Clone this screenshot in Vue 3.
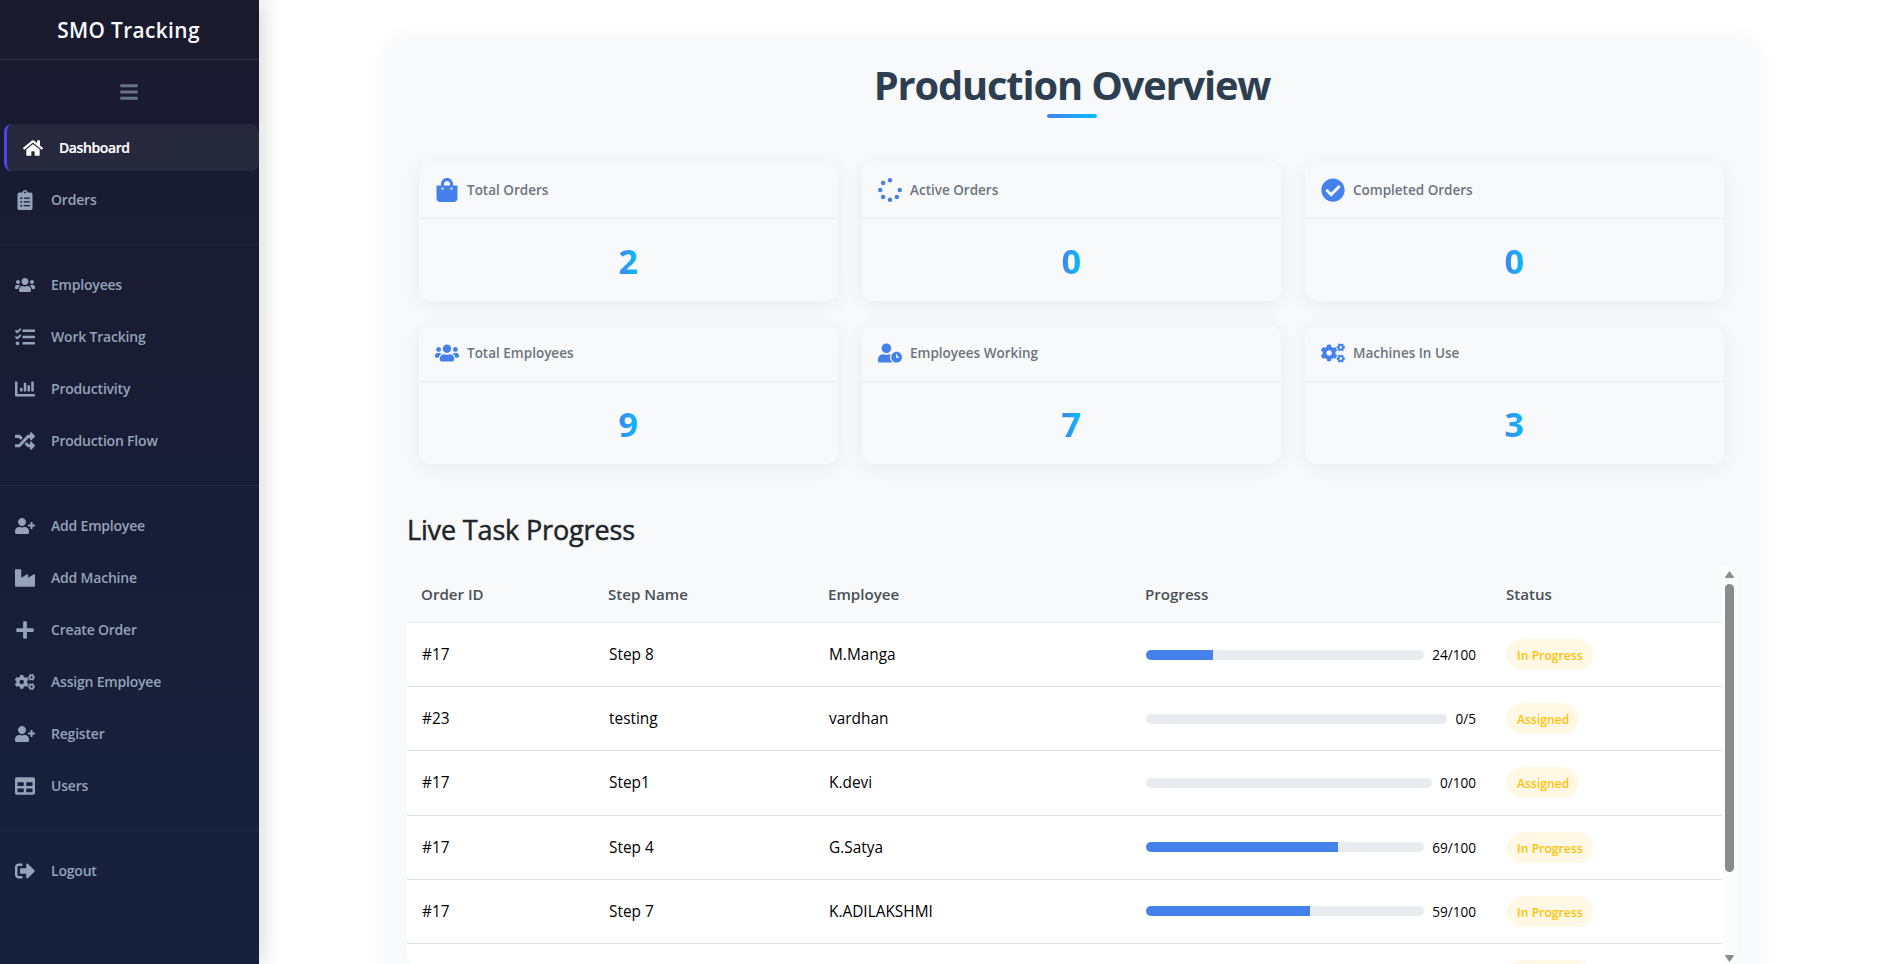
<script setup>
const smallGear = 'M512.1 191l-8.2 14.3c-3 5.3-9.4 7.5-15.1 5.4-11.8-4.4-22.6-10.7-32.1-18.6-4.6-3.8-5.8-10.5-2.8-15.7l8.2-14.3c-6.9-8-12.3-17.3-15.9-27.4h-16.5c-6 0-11.2-4.3-12.2-10.3-2-12-2.1-24.6 0-37.1 1-6 6.2-10.4 12.2-10.4h16.5c3.6-10.1 9-19.4 15.9-27.4l-8.2-14.3c-3-5.2-1.9-11.9 2.8-15.7 9.5-7.9 20.4-14.2 32.1-18.6 5.7-2.1 12.1.1 15.1 5.4l8.2 14.3c10.5-1.9 21.2-1.9 31.7 0L552 6.3c3-5.3 9.4-7.5 15.1-5.4 11.8 4.4 22.6 10.7 32.1 18.6 4.6 3.8 5.8 10.5 2.8 15.7l-8.2 14.3c6.9 8 12.3 17.3 15.9 27.4h16.5c6 0 11.2 4.3 12.2 10.3 2 12 2.1 24.6 0 37.1-1 6-6.2 10.4-12.2 10.4h-16.5c-3.6 10.1-9 19.4-15.9 27.4l8.2 14.3c3 5.2 1.9 11.9-2.8 15.7-9.5 7.9-20.4 14.2-32.1 18.6-5.7 2.1-12.1-.1-15.1-5.4l-8.2-14.3c-10.4 1.9-21.2 1.9-31.7 0zm-10.5-58.8c38.5 29.6 82.4-14.3 52.8-52.8-38.5-29.7-82.4 14.3-52.8 52.8z'
const bigGear = 'M386.3 286.1l33.7 16.8c10.1 5.8 14.5 18.1 10.5 29.1-8.9 24.2-26.4 46.4-42.6 65.8-7.4 8.9-20.2 11.1-30.3 5.3l-29.1-16.8c-16 13.7-34.6 24.6-54.9 31.7v33.6c0 11.6-8.3 21.6-19.7 23.6-24.6 4.2-50.4 4.4-75.9 0-11.5-2-20-11.9-20-23.6V418c-20.3-7.2-38.9-18-54.9-31.7L74 403c-10 5.8-22.9 3.6-30.3-5.3-16.2-19.4-33.3-41.6-42.2-65.7-4-10.9.4-23.2 10.5-29.1l33.3-16.8c-3.9-20.9-3.9-42.4 0-63.4L12 205.8c-10.1-5.8-14.6-18.1-10.5-29 8.9-24.2 26-46.4 42.2-65.8 7.4-8.9 20.2-11.1 30.3-5.3l29.1 16.8c16-13.7 34.6-24.6 54.9-31.7V57.1c0-11.5 8.2-21.5 19.6-23.5 24.6-4.2 50.5-4.4 76-.1 11.5 2 20 11.9 20 23.6v33.6c20.3 7.2 38.9 18 54.9 31.7l29.1-16.8c10-5.8 22.9-3.6 30.3 5.3 16.2 19.4 33.2 41.6 42.1 65.8 4 10.9.1 23.2-10 29.1l-33.7 16.8c3.9 21 3.9 42.5 0 63.5zm-117.6 21.1c59.2-77-28.7-164.9-105.7-105.7-59.2 77 28.7 164.9 105.7 105.7z'

const dot = (x, y, r = 48) => `M${x - r} ${y}a${r} ${r} 0 1 0 ${2 * r} 0a${r} ${r} 0 1 0 ${-2 * r} 0z`

const icons = {
  bars: { w: 448, d: 'M16 132h416c8.837 0 16-7.163 16-16V76c0-8.837-7.163-16-16-16H16C7.163 60 0 67.163 0 76v40c0 8.837 7.163 16 16 16zm0 160h416c8.837 0 16-7.163 16-16v-40c0-8.837-7.163-16-16-16H16c-8.837 0-16 7.163-16 16v40c0 8.837 7.163 16 16 16zm0 160h416c8.837 0 16-7.163 16-16v-40c0-8.837-7.163-16-16-16H16c-8.837 0-16 7.163-16 16v40c0 8.837 7.163 16 16 16z' },
  home: { w: 576, d: 'M280.37 148.26L96 300.11V464a16 16 0 0 0 16 16l112.06-.29a16 16 0 0 0 15.92-16V368a16 16 0 0 1 16-16h64a16 16 0 0 1 16 16v95.64a16 16 0 0 0 16 16.05L464 480a16 16 0 0 0 16-16V300L295.67 148.26a12.19 12.19 0 0 0-15.3 0zM571.6 251.47L488 182.56V44.05a12 12 0 0 0-12-12h-56a12 12 0 0 0-12 12v72.61L318.47 43a48 48 0 0 0-61 0L4.34 251.47a12 12 0 0 0-1.6 16.9l25.5 31A12 12 0 0 0 45.15 301l235.22-193.74a12.19 12.19 0 0 1 15.3 0L530.9 301a12 12 0 0 0 16.9-1.6l25.5-31a12 12 0 0 0-1.7-16.93z' },
  clipboard: { w: 384, d: 'M336 64h-80c0-35.3-28.7-64-64-64s-64 28.7-64 64H48C21.5 64 0 85.5 0 112v352c0 26.5 21.5 48 48 48h288c26.5 0 48-21.5 48-48V112c0-26.5-21.5-48-48-48zM96 424c-13.3 0-24-10.7-24-24s10.7-24 24-24 24 10.7 24 24-10.7 24-24 24zm0-96c-13.3 0-24-10.7-24-24s10.7-24 24-24 24 10.7 24 24-10.7 24-24 24zm0-96c-13.3 0-24-10.7-24-24s10.7-24 24-24 24 10.7 24 24-10.7 24-24 24zm96-192c13.3 0 24 10.7 24 24s-10.7 24-24 24-24-10.7-24-24 10.7-24 24-24zm128 368c0 4.4-3.6 8-8 8H168c-4.4 0-8-3.6-8-8v-16c0-4.4 3.6-8 8-8h144c4.4 0 8 3.6 8 8v16zm0-96c0 4.4-3.6 8-8 8H168c-4.4 0-8-3.6-8-8v-16c0-4.4 3.6-8 8-8h144c4.4 0 8 3.6 8 8v16zm0-96c0 4.4-3.6 8-8 8H168c-4.4 0-8-3.6-8-8v-16c0-4.4 3.6-8 8-8h144c4.4 0 8 3.6 8 8v16z' },
  users: { w: 640, d: 'M96 224c35.3 0 64-28.7 64-64s-28.7-64-64-64-64 28.7-64 64 28.7 64 64 64zm448 0c35.3 0 64-28.7 64-64s-28.7-64-64-64-64 28.7-64 64 28.7 64 64 64zm32 32h-64c-17.6 0-33.5 7.1-45.1 18.6 40.3 22.1 68.9 62 75.1 109.4h66c17.7 0 32-14.3 32-32v-32c0-35.3-28.7-64-64-64zm-256 0c61.9 0 112-50.1 112-112S381.9 32 320 32 208 82.1 208 144s50.1 112 112 112zm76.8 32h-8.3c-20.8 10-43.9 16-68.5 16s-47.6-6-68.5-16h-8.3C179.6 288 128 339.6 128 403.2V432c0 26.5 21.5 48 48 48h288c26.5 0 48-21.5 48-48v-28.8c0-63.6-51.6-115.2-115.2-115.2zm-223.7-13.4C161.5 263.1 145.6 256 128 256H64c-35.3 0-64 28.7-64 64v32c0 17.7 14.3 32 32 32h65.9c6.3-47.4 34.9-87.3 75.2-109.4z' },
  tasks: { w: 512, d: 'M139.61 35.5a12 12 0 0 0-17 0L58.93 98.81l-22.7-22.12a12 12 0 0 0-17 0L3.53 92.41a12 12 0 0 0 0 17l47.59 47.4a12.78 12.78 0 0 0 17.61 0l15.59-15.62L156.52 69a12.09 12.09 0 0 0 .09-17zm0 159.19a12 12 0 0 0-17 0l-63.68 63.72-22.7-22.1a12 12 0 0 0-17 0L3.53 252a12 12 0 0 0 0 17L51 316.5a12.77 12.77 0 0 0 17.6 0l15.7-15.69 72.2-72.22a12 12 0 0 0 .09-16.9zM64 368c-26.49 0-48.59 21.5-48.59 48S37.53 464 64 464a48 48 0 0 0 0-96zm432 16H208a16 16 0 0 0-16 16v32a16 16 0 0 0 16 16h288a16 16 0 0 0 16-16v-32a16 16 0 0 0-16-16zm0-320H208a16 16 0 0 0-16 16v32a16 16 0 0 0 16 16h288a16 16 0 0 0 16-16V80a16 16 0 0 0-16-16zm0 160H208a16 16 0 0 0-16 16v32a16 16 0 0 0 16 16h288a16 16 0 0 0 16-16v-32a16 16 0 0 0-16-16z' },
  chart: { w: 512, d: 'M332.8 320h38.4c6.4 0 12.8-6.4 12.8-12.8V172.8c0-6.4-6.4-12.8-12.8-12.8h-38.4c-6.4 0-12.8 6.4-12.8 12.8v134.4c0 6.4 6.4 12.8 12.8 12.8zm96 0h38.4c6.4 0 12.8-6.4 12.8-12.8V76.8c0-6.4-6.4-12.8-12.8-12.8h-38.4c-6.4 0-12.8 6.4-12.8 12.8v230.4c0 6.4 6.4 12.8 12.8 12.8zm-288 0h38.4c6.4 0 12.8-6.4 12.8-12.8v-70.4c0-6.4-6.4-12.8-12.8-12.8h-38.4c-6.4 0-12.8 6.4-12.8 12.8v70.4c0 6.4 6.4 12.8 12.8 12.8zm96 0h38.4c6.4 0 12.8-6.4 12.8-12.8V108.8c0-6.4-6.4-12.8-12.8-12.8h-38.4c-6.4 0-12.8 6.4-12.8 12.8v198.4c0 6.4 6.4 12.8 12.8 12.8zM496 384H64V80c0-8.84-7.16-16-16-16H16C7.16 64 0 71.16 0 80v336c0 17.67 14.33 32 32 32h464c8.84 0 16-7.16 16-16v-32c0-8.84-7.16-16-16-16z' },
  random: { w: 512, d: 'M504.971 359.029c9.373 9.373 9.373 24.569 0 33.941l-80 79.984c-15.01 15.01-40.971 4.49-40.971-16.971V416h-58.785a12.004 12.004 0 0 1-8.773-3.812l-70.556-75.596 53.333-57.143L352 336h32v-39.981c0-21.438 25.943-31.998 40.971-16.971l80 79.981zM12 176h84l52.781 56.551 53.333-57.143-70.556-75.596A11.999 11.999 0 0 0 122.785 96H12c-6.627 0-12 5.373-12 12v56c0 6.627 5.373 12 12 12zm372 0v39.984c0 21.46 25.961 31.98 40.971 16.971l80-79.984c9.373-9.373 9.373-24.569 0-33.941l-80-79.981C409.943 24.021 384 34.582 384 56.019V96h-58.785a12.004 12.004 0 0 0-8.773 3.812L96 336H12c-6.627 0-12 5.373-12 12v56c0 6.627 5.373 12 12 12h110.785c3.326 0 6.503-1.381 8.773-3.812L352 176h32z' },
  userPlus: { w: 640, d: 'M624 208h-64v-64c0-8.8-7.2-16-16-16h-32c-8.8 0-16 7.2-16 16v64h-64c-8.8 0-16 7.2-16 16v32c0 8.8 7.2 16 16 16h64v64c0 8.8 7.2 16 16 16h32c8.8 0 16-7.2 16-16v-64h64c8.8 0 16-7.2 16-16v-32c0-8.8-7.2-16-16-16zm-400 48c70.7 0 128-57.3 128-128S294.7 0 224 0 96 57.3 96 128s57.3 128 128 128zm89.6 32h-16.7c-22.2 10.2-46.9 16-72.9 16s-50.6-5.8-72.9-16h-16.7C60.2 288 0 348.2 0 422.4V464c0 26.5 21.5 48 48 48h352c26.5 0 48-21.5 48-48v-41.6c0-74.2-60.2-134.4-134.4-134.4z' },
  industry: { w: 512, d: 'M475.115 163.781L336 252.309v-68.28c0-18.916-20.931-30.399-36.885-20.248L160 252.309V56c0-13.255-10.745-24-24-24H24C10.745 32 0 42.745 0 56v400c0 13.255 10.745 24 24 24h464c13.255 0 24-10.745 24-24V184.029c0-18.917-20.931-30.399-36.885-20.248z' },
  plus: { w: 448, d: 'M416 208H272V64c0-17.67-14.33-32-32-32h-32c-17.67 0-32 14.33-32 32v144H32c-17.67 0-32 14.33-32 32v32c0 17.67 14.33 32 32 32h144v144c0 17.67 14.33 32 32 32h32c17.67 0 32-14.33 32-32V304h144c17.67 0 32-14.33 32-32v-32c0-17.67-14.33-32-32-32z' },
  cogs: { w: 640, d: smallGear + bigGear + smallGear.replace('M512.1 191', 'M512.1 489.9').replace('L552 6.3', 'L552 305.2') },
  table: { w: 512, d: 'M464 32H48C21.49 32 0 53.49 0 80v352c0 26.51 21.49 48 48 48h416c26.51 0 48-21.49 48-48V80c0-26.51-21.49-48-48-48zM224 416H64v-96h160v96zm0-160H64v-96h160v96zm224 160H288v-96h160v96zm0-160H288v-96h160v96z' },
  signOut: { w: 512, d: 'M497 273L329 441c-15 15-41 4.5-41-17v-96H152c-13.3 0-24-10.7-24-24v-96c0-13.3 10.7-24 24-24h136V88c0-21.4 25.9-32 41-17l168 168c9.3 9.4 9.3 24.6 0 34zM192 436v-40c0-6.6-5.4-12-12-12H96c-17.7 0-32-14.3-32-32V160c0-17.7 14.3-32 32-32h84c6.6 0 12-5.4 12-12V76c0-6.6-5.4-12-12-12H96c-53 0-96 43-96 96v192c0 53 43 96 96 96h84c6.6 0 12-5.4 12-12z' },
  bag: { w: 448, d: 'M352 160v-32C352 57.42 294.579 0 224 0 153.42 0 96 57.42 96 128v32H0v272c0 44.183 35.817 80 80 80h288c44.183 0 80-35.817 80-80V160h-96zm-192-32c0-35.29 28.71-64 64-64s64 28.71 64 64v32H160v-32zm160 120c-13.255 0-24-10.745-24-24s10.745-24 24-24 24 10.745 24 24-10.745 24-24 24zm-192 0c-13.255 0-24-10.745-24-24s10.745-24 24-24 24 10.745 24 24-10.745 24-24 24z' },
  spinner: { w: 512, d: dot(256, 48) + dot(256, 464) + dot(48, 256) + dot(464, 256) + dot(402.9, 402.9) + dot(109.1, 109.1) + dot(109.1, 402.9) },
  check: { w: 512, d: 'M504 256c0 136.967-111.033 248-248 248S8 392.967 8 256 119.033 8 256 8s248 111.033 248 248zM227.314 387.314l184-184c6.248-6.248 6.248-16.379 0-22.627l-22.627-22.627c-6.248-6.249-16.379-6.249-22.628 0L216 308.118l-70.059-70.059c-6.248-6.248-16.379-6.248-22.628 0l-22.627 22.627c-6.248 6.248-6.248 16.379 0 22.627l104 104c6.249 6.249 16.379 6.249 22.628.001z' },
  userClock: { w: 640, d: 'M496 224c-79.6 0-144 64.4-144 144s64.4 144 144 144 144-64.4 144-144-64.4-144-144-144zm64 150.3c0 5.3-4.4 9.7-9.7 9.7h-60.6c-5.3 0-9.7-4.4-9.7-9.7v-76.6c0-5.3 4.4-9.7 9.7-9.7h12.6c5.3 0 9.7 4.4 9.7 9.7V352h38.3c5.3 0 9.7 4.4 9.7 9.7v12.6zM320 368c0-27.8 6.7-54.1 18.2-77.5-8-1.5-16.2-2.5-24.6-2.5h-16.7c-22.2 10.2-46.9 16-72.9 16s-50.6-5.8-72.9-16h-16.7C60.2 288 0 348.2 0 422.4V464c0 26.5 21.5 48 48 48h347.1c-45.3-31.9-75.1-84.5-75.1-144zm-96-112c70.7 0 128-57.3 128-128S294.7 0 224 0 96 57.3 96 128s57.3 128 128 128z' },
}

const box = (name) => `0 0 ${icons[name].w} 512`

const groups = [
  [
    { icon: 'home', label: 'Dashboard', active: true },
    { icon: 'clipboard', label: 'Orders' },
  ],
  [
    { icon: 'users', label: 'Employees' },
    { icon: 'tasks', label: 'Work Tracking' },
    { icon: 'chart', label: 'Productivity' },
    { icon: 'random', label: 'Production Flow' },
  ],
  [
    { icon: 'userPlus', label: 'Add Employee' },
    { icon: 'industry', label: 'Add Machine' },
    { icon: 'plus', label: 'Create Order' },
    { icon: 'cogs', label: 'Assign Employee' },
    { icon: 'userPlus', label: 'Register' },
    { icon: 'table', label: 'Users' },
  ],
  [{ icon: 'signOut', label: 'Logout' }],
]

const cards = [
  { icon: 'bag', label: 'Total Orders', value: 2 },
  { icon: 'spinner', label: 'Active Orders', value: 0 },
  { icon: 'check', label: 'Completed Orders', value: 0 },
  { icon: 'users', label: 'Total Employees', value: 9 },
  { icon: 'userClock', label: 'Employees Working', value: 7 },
  { icon: 'cogs', label: 'Machines In Use', value: 3 },
]

const tasks = [
  { order: '#17', step: 'Step 8', employee: 'M.Manga', done: 24, total: 100, status: 'In Progress' },
  { order: '#23', step: 'testing', employee: 'vardhan', done: 0, total: 5, status: 'Assigned' },
  { order: '#17', step: 'Step1', employee: 'K.devi', done: 0, total: 100, status: 'Assigned' },
  { order: '#17', step: 'Step 4', employee: 'G.Satya', done: 69, total: 100, status: 'In Progress' },
  { order: '#17', step: 'Step 7', employee: 'K.ADILAKSHMI', done: 59, total: 100, status: 'In Progress' },
]
</script>

<template>
  <div class="layout">
    <aside class="sidebar">
      <div class="brand">SMO Tracking</div>
      <div class="toggle">
        <svg class="nav-icon" :viewBox="box('bars')"><path :d="icons.bars.d" /></svg>
      </div>
      <nav>
        <ul v-for="(group, i) in groups" :key="i" class="group">
          <li v-for="item in group" :key="item.label" class="nav-row">
            <a class="nav-item" :class="{ active: item.active }">
              <svg class="nav-icon" :viewBox="box(item.icon)"><path :d="icons[item.icon].d" /></svg>
              <span>{{ item.label }}</span>
            </a>
          </li>
        </ul>
      </nav>
    </aside>

    <main class="main">
      <section class="panel">
        <h1 class="title">Production Overview</h1>
        <div class="cards">
          <article v-for="card in cards" :key="card.label" class="card">
            <header class="card-head">
              <svg class="card-icon" :viewBox="box(card.icon)"><path :d="icons[card.icon].d" /></svg>
              <span>{{ card.label }}</span>
            </header>
            <div class="card-body"><span class="value">{{ card.value }}</span></div>
          </article>
        </div>

        <h2 class="subtitle">Live Task Progress</h2>
        <div class="table-wrap">
          <table class="table">
            <colgroup>
              <col class="c-order" /><col class="c-step" /><col class="c-emp" /><col class="c-prog" /><col />
            </colgroup>
            <thead>
              <tr><th>Order ID</th><th>Step Name</th><th>Employee</th><th>Progress</th><th>Status</th></tr>
            </thead>
            <tbody>
              <tr v-for="(t, i) in tasks" :key="i">
                <td>{{ t.order }}</td>
                <td>{{ t.step }}</td>
                <td>{{ t.employee }}</td>
                <td>
                  <div class="progress">
                    <div class="track"><div class="fill" :style="{ width: (t.done / t.total) * 100 + '%' }"></div></div>
                    <span class="count">{{ t.done }}/{{ t.total }}</span>
                  </div>
                </td>
                <td><span class="badge">{{ t.status }}</span></td>
              </tr>
              <tr>
                <td colspan="4"></td>
                <td><span class="badge blank"></span></td>
              </tr>
            </tbody>
          </table>
          <div class="scrollbar">
            <svg class="arrow" viewBox="0 0 9 7"><path d="M4.5 0 9 6.2Q9 7 8.2 7H.8Q0 7 0 6.2z" /></svg>
            <div class="thumb"></div>
            <svg class="arrow down" viewBox="0 0 9 7"><path d="M4.5 7 9 .8Q9 0 8.2 0H.8Q0 0 0 .8z" /></svg>
          </div>
        </div>
      </section>
    </main>
  </div>
</template>

<style>
html, body { overflow: hidden; background: #fff; }
</style>

<style scoped>
* { box-sizing: border-box; }
.layout {
  display: flex;
  height: 964px;
  overflow: hidden;
  font-family: "Open Sans", "Noto Sans", sans-serif;
  color: #212529;
}
svg { fill: currentColor; flex: none; display: block; }

.sidebar {
  width: 259px;
  flex: none;
  background: linear-gradient(180deg, #1a1a2e 0%, #16213e 100%);
  box-shadow: 4px 0 20px rgba(0, 0, 0, 0.15);
  color: #94a3b8;
}
.brand {
  height: 60px;
  border-bottom: 1px solid rgba(255, 255, 255, 0.1);
  text-align: center;
  line-height: 60px;
  padding-right: 2px;
  font-size: 20.8px;
  font-weight: 600;
  letter-spacing: 0.4px;
  color: #f8fafc;
}
.toggle { height: 62px; display: flex; justify-content: center; align-items: center; color: #64748b; padding: 1px 2px 0 0; }
.group { list-style: none; margin: 0; padding: 0; }
.group + .group { margin-top: 18px; padding-top: 14px; border-top: 1px solid rgba(255, 255, 255, 0.05); }
.nav-row { height: 52px; padding-top: 2px; }
.nav-item {
  display: flex;
  align-items: center;
  gap: 16px;
  height: 47px;
  padding-left: 15px;
  font-size: 14px;
  font-weight: 600;
  letter-spacing: -0.2px;
}
.nav-item.active {
  margin-left: 4px;
  padding-left: 16px;
  border-left: 3px solid #4f46e5;
  border-radius: 8px;
  background: rgba(255, 255, 255, 0.06);
  color: #fff;
  letter-spacing: -0.4px;
  -webkit-text-stroke: 0.2px #fff;
}
.nav-icon { width: 20px; height: 20px; }

.main { flex: 1; padding: 40px 0 0 128px; }
.panel {
  width: 1370px;
  height: 1000px;
  padding: 20px;
  border-radius: 16px;
  background: #f8f9fb;
  box-shadow: 0 0 24px rgba(0, 0, 0, 0.05);
}
.title {
  display: flex;
  flex-direction: column;
  align-items: center;
  margin: 0 0 44px;
  font-size: 39.8px;
  line-height: 49px;
  letter-spacing: -1.15px;
  font-weight: 700;
  color: #2c3e50;
}
.title::after {
  content: "";
  width: 50px;
  height: 4px;
  margin-top: 5px;
  border-radius: 2px;
  background: linear-gradient(90deg, #4481eb, #04befe);
}
.cards { display: grid; grid-template-columns: repeat(3, 419px); gap: 24px; padding: 0 12px; }
.card { height: 139px; border-radius: 12px; background: #f8f9fb; box-shadow: 0 4px 20px rgba(0, 0, 0, 0.06); }
.card-head {
  height: 57px;
  display: flex;
  align-items: center;
  gap: 8px;
  padding: 0 16px;
  border-bottom: 1px solid rgba(0, 0, 0, 0.06);
  font-size: 13.5px;
  font-weight: 600;
  color: #6c757d;
}
.card-icon { width: 24px; height: 24px; color: #4481eb; }
.card-body { height: 82px; display: flex; justify-content: center; align-items: center; padding: 1px 1px 0 0; }
.value {
  font-size: 34.5px;
  font-weight: 700;
  line-height: 46px;
  letter-spacing: -0.5px;
  background: linear-gradient(90deg, #4481eb, #04befe);
  -webkit-background-clip: text;
  background-clip: text;
  color: transparent;
}
.subtitle {
  margin: 47px 0 18px;
  font-size: 27px;
  line-height: 37px;
  font-weight: 500;
  letter-spacing: -0.15px;
  -webkit-text-stroke: 0.5px #212529;
}
.table-wrap { display: flex; height: 400px; width: 1330px; border-radius: 12px; overflow: hidden; background: #fff; }
.table { width: 1315px; flex: none; table-layout: fixed; border-collapse: separate; border-spacing: 0; align-self: flex-start; }
.c-order { width: 187px; }
.c-step { width: 220px; }
.c-emp { width: 317px; }
.c-prog { width: 361px; }
th {
  height: 57px;
  padding: 0 14px;
  text-align: left;
  font-size: 15.1px;
  font-weight: 600;
  color: #495057;
  background: #f8f9fb;
  border-bottom: 1px solid #e6e9ee;
}
td { height: 64.2px; padding: 0 16px 0 15px; font-size: 15.4px; color: #000; border-bottom: 1px solid #dee2e6; }
.progress { display: flex; align-items: center; gap: 8px; }
.track { flex: 1; height: 10px; border-radius: 5px; background: #e9ecef; overflow: hidden; }
.fill { height: 100%; background: #4481eb; }
.count { font-size: 13.6px; }
.badge {
  display: inline-block;
  height: 31px;
  padding: 1px 10px 0;
  line-height: 31px;
  border-radius: 16px;
  background: #fff8e5;
  color: #ffc107;
  font-size: 12.2px;
  font-weight: 600;
  vertical-align: middle;
}
.badge.blank { width: 85px; }
.scrollbar { width: 15px; display: flex; flex-direction: column; align-items: center; padding: 5px 0 4px; background: #fcfcfc; }
.arrow { width: 9px; height: 7px; color: #8b8b8b; }
.thumb { width: 9px; height: 288px; margin-top: 6px; border-radius: 5px; background: #8b8b8b; }
.arrow.down { margin-top: auto; }
</style>
